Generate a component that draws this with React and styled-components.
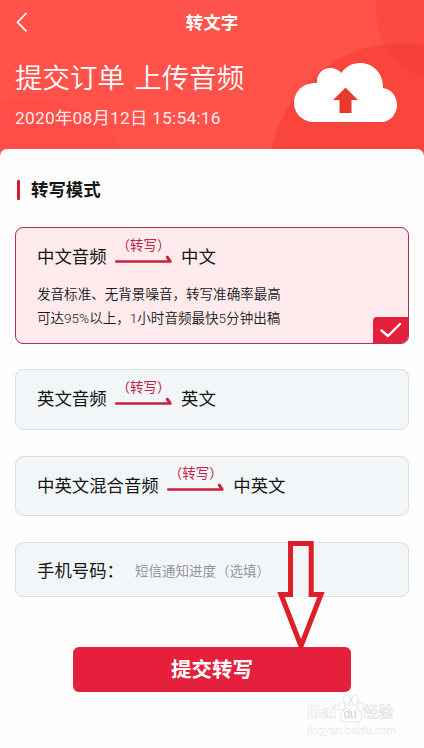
import React from 'react'
import styled, { createGlobalStyle } from 'styled-components'

const GlobalStyle = createGlobalStyle`
* { box-sizing: border-box; }
body {
margin: 0;
background: #fefefe;
font-family: Roboto, "Noto Sans CJK SC", sans-serif;
color: #161616;
}
`

const Container = styled.div`
position: relative;
width: 424px;
height: 748px;
overflow: hidden;
`

const Header = styled.header`
position: relative;
height: 156px;
padding: 8px 15px 0;
background: #ff524b;
color: white;
`

const HeaderShapes = styled.svg`
position: absolute;
top: 0;
left: 0;
`

const Top = styled.div`
position: relative;
display: grid;
grid-template-columns: 40px 1fr 40px;
align-items: center;
height: 30px;
`

const BackIcon = styled.svg`
display: block;
margin-top: -3px;
`

const Title = styled.h1`
margin: 0;
font-size: 17.5px;
line-height: 30px;
font-weight: 700;
text-align: center;
`

const Banner = styled.div`
position: relative;
display: flex;
justify-content: space-between;
padding-right: 12px;
`

const Heading = styled.div`
margin-top: 18px;
font-family: "Noto Sans CJK SC", sans-serif;
font-size: 27.5px;
line-height: 40px;
font-weight: 350;
word-spacing: 3px;
white-space: nowrap;
`

const OrderDate = styled.div`
margin-top: 9px;
font-size: 17.4px;
line-height: 26px;
letter-spacing: 0.2px;
color: #ffe9e7;
`

const Cloud = styled.svg`
flex: none;
margin-top: 24.5px;
`

const Sheet = styled.main`
position: relative;
margin-top: -7px;
padding: 27px 15px 0;
height: 599px;
border-radius: 7px 7px 0 0;
background: #fefefe;
`

const SectionTitle = styled.h2`
display: flex;
align-items: center;
gap: 11px;
margin: 0 0 23px;
padding-left: 2px;
height: 28px;
font-size: 17.4px;
line-height: 28px;
font-weight: 700;

&::before {
content: "";
width: 3px;
height: 20px;
border-radius: 1px;
background: #d01c34;
}
`

const Card = styled.section`
position: relative;
height: ${props => props.$height}px;
margin-bottom: 25.7px;
padding: 15px 21px 0;
border: ${props => props.$active ? "1.5px solid #b62e4b" : "1px solid #d9dfe2"};
border-radius: 8px;
background: ${props => props.$active ? "#ffebed" : "#f3f6f9"};
overflow: hidden;
`

const Route = styled.div`
display: flex;
align-items: center;
gap: 9px;
height: 28px;
font-size: 17.4px;
line-height: 28px;
`

const Step = styled.div`
display: flex;
flex-direction: column;
align-items: center;
width: 57px;
margin: -15px 0 0 -0.5px;
color: #c32245;
font-size: 13.5px;
line-height: 18px;
white-space: nowrap;
`

const Description = styled.p`
margin: 12px 0 0;
font-size: 13.55px;
font-weight: 350;
line-height: 23.5px;
white-space: pre;
`

const Badge = styled.div`
position: absolute;
right: -1px;
bottom: -1px;
display: flex;
align-items: center;
justify-content: center;
width: 36px;
height: 27px;
border-radius: 4px 0 0 0;
background: #e5203c;
`

const PhoneRow = styled.label`
display: flex;
align-items: center;
height: 28px;
margin-top: -1.5px;
font-size: 17.4px;
line-height: 28px;
`

const PhoneLabel = styled.span`
width: 98px;
white-space: nowrap;
`

const PhoneHint = styled.span`
color: #8e8e96;
font-size: 13.5px;
font-weight: 350;
`

const Button = styled.button`
display: block;
width: 278px;
height: 45px;
margin: 49.8px 0 0 58px;
padding: 2px 0 0;
border: 0;
border-radius: 6px;
background: #e5203c;
color: white;
font-family: inherit;
font-size: 20.5px;
font-weight: 700;
line-height: 43px;
`

const Pointer = styled.svg`
position: absolute;
left: 276px;
top: 538px;
`

const Watermark = styled.div`
position: absolute;
left: 307px;
top: 694px;
width: 92px;
color: #fefefe;
font-family: "Liberation Sans", "Noto Sans CJK SC", sans-serif;
-webkit-text-stroke: 0.5px #d9d9d9;
`

const WatermarkBrand = styled.div`
display: flex;
align-items: flex-end;
height: 29px;
font-size: 19px;
font-weight: 700;
line-height: 22px;
`

const Paw = styled.div`
position: relative;
width: 27px;
height: 29px;
text-align: center;
font-size: 12px;
font-weight: 400;
line-height: 41px;

svg {
position: absolute;
top: 0;
left: 0;
}

span {
position: relative;
color: #cfcfcf;
-webkit-text-stroke: 0;
}
`

const WatermarkCn = styled.span`
font-size: 15px;
line-height: 23px;
font-weight: 500;
`

const WatermarkUrl = styled.div`
margin-top: 1px;
font-size: 11px;
line-height: 13px;
-webkit-text-stroke: 0.3px #dedede;
`

const ConvertStep = () => (
    <Step>
        <span>（转写）</span>
        <svg width="57" height="10" viewBox="0 0 57 10" fill="none" stroke="#cb2038" strokeLinecap="round" strokeLinejoin="round">
            <path d="M1.2 7.5H55.5L52.5 3" strokeWidth="2.4" />
            <path d="M52 3L54.5 7" strokeWidth="2.4" />
        </svg>
    </Step>
)

const modes = [
    {
        from: "中文音频",
        to: "中文",
        height: 116.5,
        active: true,
        description: "发音标准、无背景噪音，转写准确率最高\n可达95%以上，1小时音频最快5分钟出稿",
    },
    { from: "英文音频", to: "英文", height: 60.8 },
    { from: "中英文混合音频", to: "中英文", height: 60.8 },
]

const App = () => {
    return (
        <Container>
            <GlobalStyle />
            <Header>
                <HeaderShapes width="424" height="156" fill="#f4382f">
                    <circle cx="447" cy="11" r="71" fillOpacity="0.3" />
                    <circle cx="402" cy="176" r="133" fillOpacity="0.48" />
                    <circle cx="31" cy="208" r="110" fillOpacity="0.13" />
                </HeaderShapes>
                <Top>
                    <BackIcon width="14" height="22" viewBox="0 0 14 22" fill="none" stroke="white" strokeWidth="1.7">
                        <path d="M11.5 2L2.5 11.2L11.5 20.4" />
                    </BackIcon>
                    <Title>转文字</Title>
                </Top>
                <Banner>
                    <div>
                        <Heading>提交订单 上传音频</Heading>
                        <OrderDate>2020年08月12日 15:54:16</OrderDate>
                    </div>
                    <Cloud width="103" height="60" viewBox="0 0 103 60">
                        <path fill="white" d="M18 59C8 58 0 50 0 40C0 28 10 19 23 20C22 11 29 5 36 5C41 5 45 7 47.5 10C51 4 58 0 66 0C79 0 89 10 89 24V25C97 26 103 33 103 42C103 51 96 59 88 59Z" />
                        <path fill="#e8382f" d="M51.5 24.5L64 37H57.5V50H45.5V37H39Z" />
                    </Cloud>
                </Banner>
            </Header>

            <Sheet>
                <SectionTitle>转写模式</SectionTitle>
                {modes.map(mode =>
                    <Card key={mode.from} $height={mode.height} $active={mode.active}>
                        <Route>
                            <span>{mode.from}</span>
                            <ConvertStep />
                            <span>{mode.to}</span>
                        </Route>
                        {mode.description && <Description>{mode.description}</Description>}
                        {mode.active &&
                            <Badge>
                                <svg width="22" height="16" viewBox="0 0 22 16" fill="none" stroke="white" strokeWidth="2.4" strokeLinecap="round" strokeLinejoin="round">
                                    <path d="M1.5 8.5L8 14L20 2" />
                                </svg>
                            </Badge>
                        }
                    </Card>
                )}
                <Card $height={55}>
                    <PhoneRow>
                        <PhoneLabel>手机号码：</PhoneLabel>
                        <PhoneHint>短信通知进度（选填）</PhoneHint>
                    </PhoneRow>
                </Card>
                <Button>提交转写</Button>
            </Sheet>

            <Pointer width="50" height="112" fill="none" stroke="#dc2027" strokeWidth="5">
                <path fill="#fefefe" stroke="none" d="M14.5 6H35.5V57H45L25 105L5 57H14.5Z" />
                <path fill="#f3f6f9" stroke="none" d="M14.5 6H35.5V59H14.5Z" />
                <path d="M14.5 5.5H35.2V56.5H45L25 108L5 56.5H14.5Z" strokeMiterlimit="2" />
            </Pointer>

            <Watermark>
                <WatermarkBrand>
                    <span>Bai</span>
                    <Paw>
                        <svg width="28" height="29" fill="#fefefe" stroke="#dcdcdc" strokeWidth="0.8">
                            <ellipse cx="4.5" cy="12" rx="3.2" ry="4.2" />
                            <ellipse cx="10" cy="5.5" rx="3.4" ry="4.5" />
                            <ellipse cx="18" cy="6" rx="3.4" ry="4.5" />
                            <ellipse cx="23.5" cy="13" rx="3.2" ry="4.2" />
                            <path d="M14 11C10 11 9 15 6 17C2 20 2 28 9 28C12 28 16 28 20 28C26 28 26 20 22 17C19 15 18 11 14 11Z" />
                        </svg>
                        <span>du</span>
                    </Paw>
                    <WatermarkCn>经验</WatermarkCn>
                </WatermarkBrand>
                <WatermarkUrl>jingyan.baidu.com</WatermarkUrl>
            </Watermark>
        </Container>
    )
}

export default App
